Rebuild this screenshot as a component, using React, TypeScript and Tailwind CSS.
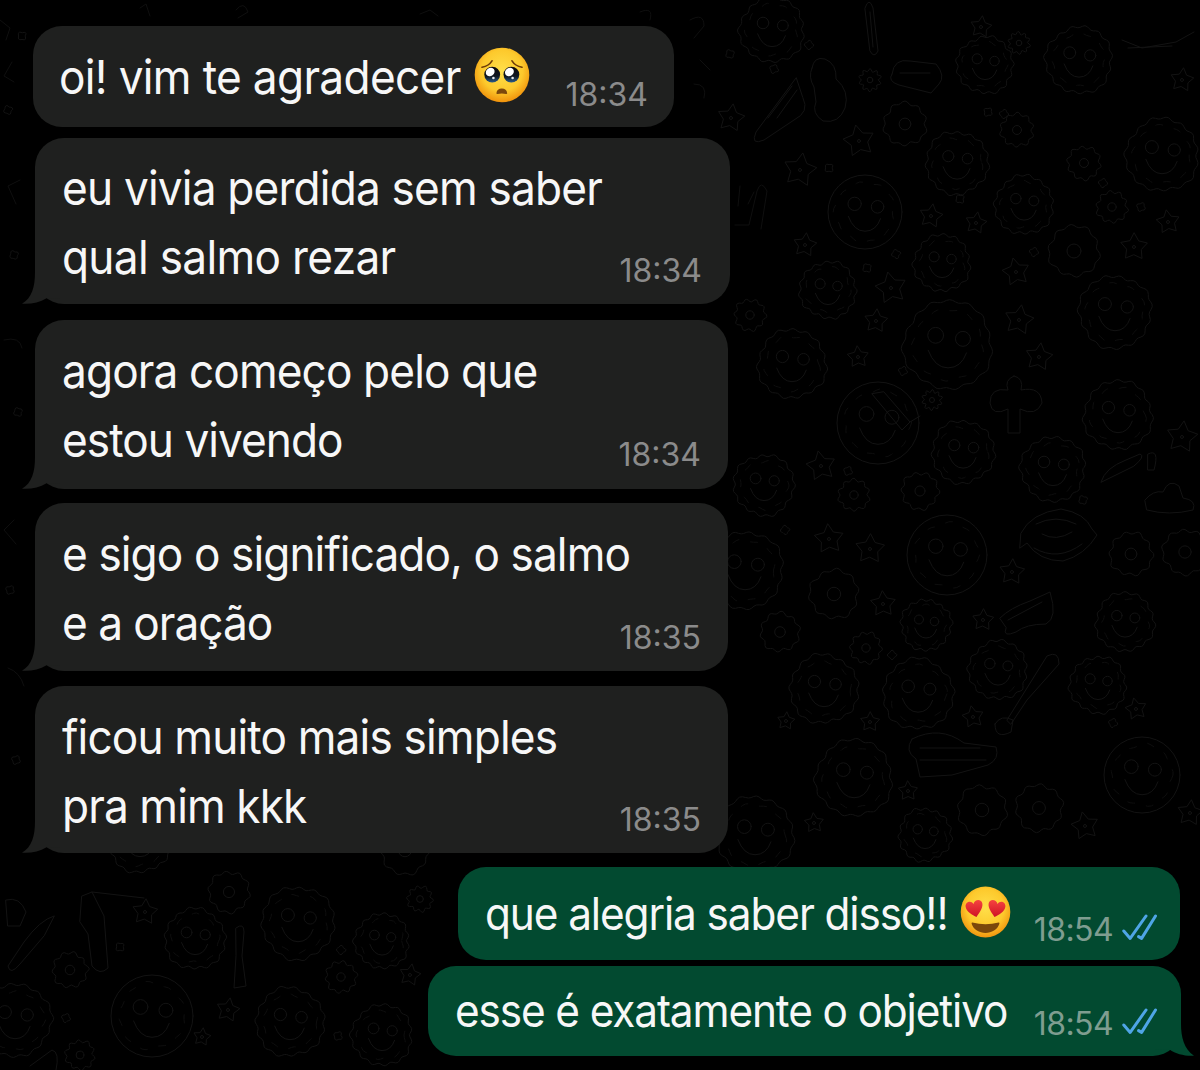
import React from "react";
import clsx from "clsx";

type Line = { text: string; className: string };

type Message = {
  id: number;
  mine?: boolean;
  tail?: boolean;
  lines: Line[];
  emoji?: "pleading" | "hearts";
  time: string;
  box: string;
  textBox: string;
  timeBox: string;
};

const messages: Message[] = [
  {
    id: 1,
    lines: [{ text: "oi! vim te agradecer", className: "tracking-[-0.71px]" }],
    emoji: "pleading",
    time: "18:34",
    box: "ml-[33px] mt-[26px] h-[101px] w-[641px] pt-[16px] pl-[26px] pr-[26px]",
    textBox: "w-[401px]",
    timeBox: "pb-[16px]",
  },
  {
    id: 2,
    tail: true,
    lines: [
      { text: "eu vivia perdida sem saber", className: "tracking-[-0.86px]" },
      { text: "qual salmo rezar", className: "tracking-[-0.72px]" },
    ],
    time: "18:34",
    box: "ml-[35px] mt-[11px] h-[166px] w-[695px] pt-[15px] pl-[27px] pr-[28px]",
    textBox: "w-[540px]",
    timeBox: "pb-[17px]",
  },
  {
    id: 3,
    tail: true,
    lines: [
      { text: "agora começo pelo que", className: "tracking-[-0.94px]" },
      { text: "estou vivendo", className: "tracking-[-1.02px]" },
    ],
    time: "18:34",
    box: "ml-[35px] mt-[16px] h-[169px] w-[693px] pt-[16px] pl-[27px] pr-[27px]",
    textBox: "w-[540px]",
    timeBox: "pb-[18px]",
  },
  {
    id: 4,
    tail: true,
    lines: [
      { text: "e sigo o significado, o salmo", className: "tracking-[-0.96px]" },
      { text: "e a oração", className: "tracking-[-1.08px]" },
    ],
    time: "18:35",
    box: "ml-[35px] mt-[14px] h-[168px] w-[693px] pt-[16px] pl-[27px] pr-[27px]",
    textBox: "w-[540px]",
    timeBox: "pb-[17px]",
  },
  {
    id: 5,
    tail: true,
    lines: [
      { text: "ficou muito mais simples", className: "tracking-[-0.89px]" },
      { text: "pra mim kkk", className: "tracking-[-0.95px]" },
    ],
    time: "18:35",
    box: "ml-[35px] mt-[15px] h-[167px] w-[693px] pt-[16px] pl-[27px] pr-[27px]",
    textBox: "w-[540px]",
    timeBox: "pb-[17px]",
  },
  {
    id: 6,
    mine: true,
    lines: [{ text: "que alegria saber disso!!", className: "tracking-[-1.15px]" }],
    emoji: "hearts",
    time: "18:54",
    box: "ml-[458px] mt-[14px] h-[93px] w-[722px] pt-[12px] pl-[27px] pr-[23px]",
    textBox: "w-[462px]",
    timeBox: "pb-[14px]",
  },
  {
    id: 7,
    mine: true,
    tail: true,
    lines: [{ text: "esse é exatamente o objetivo", className: "tracking-[-1.18px]" }],
    time: "18:54",
    box: "ml-[428px] mt-[6px] h-[90px] w-[753px] pt-[10px] pl-[27px] pr-[24px]",
    textBox: "w-[552px]",
    timeBox: "pb-[16px]",
  },
];

// [x, y, radius]
const faces = [
  [957, 163, 31], [865, 212, 37], [1024, 205, 29], [1162, 155, 36], [1079, 60, 33],
  [942, 263, 28], [792, 364, 34], [948, 345, 44], [1115, 312, 36], [963, 452, 31],
  [1053, 469, 32], [947, 555, 40], [764, 485, 30], [745, 570, 38],
  [926, 625, 25], [1125, 622, 29], [918, 694, 35], [998, 670, 29], [854, 778, 38],
  [1142, 775, 38], [755, 835, 38], [925, 835, 26], [824, 689, 34], [772, 30, 32],
  [985, 65, 28], [828, 290, 28], [1118, 415, 34], [878, 423, 41], [1098, 685, 28],
  [152, 1016, 41], [298, 923, 36], [290, 1022, 34], [382, 941, 27], [195, 939, 30],
  [382, 1035, 30], [15, 1020, 36], [140, 840, 32],
];

// outlines drawn as a plain ring instead of a scalloped one
const rings = [865, 878, 947, 1142, 152];

const flowers = [
  [1019, 43, 10], [905, 124, 21], [1017, 130, 16], [1084, 163, 16], [1112, 207, 15],
  [1074, 251, 25], [750, 315, 15], [920, 491, 18], [854, 495, 15], [1131, 554, 21],
  [834, 594, 24], [780, 632, 19], [866, 648, 15], [982, 810, 24], [1039, 808, 23],
  [1185, 552, 22], [229, 892, 20], [341, 977, 15], [420, 899, 12], [70, 970, 17],
  [870, 80, 10], [932, 400, 9], [405, 850, 24], [80, 1055, 14],
];

const stars = [
  [859, 141, 16], [731, 118, 14], [931, 216, 12], [976, 223, 11], [805, 245, 12],
  [1134, 247, 14], [1016, 272, 14], [891, 288, 16], [876, 321, 12], [1019, 320, 15],
  [1039, 357, 14], [821, 466, 15], [829, 539, 15], [870, 549, 15], [1012, 572, 13],
  [883, 604, 13], [981, 27, 11], [1182, 437, 16], [786, 721, 9], [908, 791, 10],
  [814, 823, 10], [1136, 709, 11], [1085, 826, 14], [1190, 813, 13], [973, 717, 11],
  [870, 722, 10], [983, 620, 11], [228, 1010, 12], [145, 912, 13], [410, 975, 11],
  [202, 1037, 9], [1182, 80, 12], [800, 170, 17], [1168, 222, 12], [858, 357, 11],
];

const dots = [
  [730, 54], [809, 45], [829, 168], [774, 69], [1103, 183], [896, 254], [1034, 252],
  [867, 268], [1141, 207], [903, 371], [960, 199], [848, 471], [785, 530], [892, 655],
  [1113, 723], [1083, 500], [120, 947], [341, 950], [338, 1036], [66, 1018], [8, 110],
  [22, 36], [14, 255], [18, 412], [10, 590], [16, 760], [1004, 114], [988, 112],
];

// wavy closed outline, the wobble depends on the position only
function wavy(cx: number, cy: number, r: number, lobes: number, amp: number) {
  const steps = lobes * 6;
  let d = "";
  for (let i = 0; i < steps; i++) {
    const a = (i / steps) * Math.PI * 2;
    const wobble = Math.sin(a * 3 + cx) * r * 0.025 + Math.sin(a * 5 + cy) * r * 0.02;
    const rr = r + Math.sin(a * lobes + cy) * amp + wobble;
    const x = cx + Math.cos(a) * rr;
    const y = cy + Math.sin(a) * rr;
    d += `${i === 0 ? "M" : "L"}${x.toFixed(1)} ${y.toFixed(1)}`;
  }
  return d + "Z";
}

function star(cx: number, cy: number, r: number) {
  let d = "";
  for (let i = 0; i < 10; i++) {
    const a = (i / 10) * Math.PI * 2 - Math.PI / 2 + Math.sin(cx) * 0.2;
    const rr = i % 2 === 0 ? r : r * 0.55;
    d += `${i === 0 ? "M" : "L"}${(cx + Math.cos(a) * rr).toFixed(1)} ${(cy + Math.sin(a) * rr).toFixed(1)}`;
  }
  return d + "Z";
}

function Wallpaper() {
  return (
    <svg
      className="absolute inset-0 h-full w-full"
      viewBox="0 0 1200 1070"
      fill="none"
      stroke="#131313"
      strokeWidth="1"
      strokeLinejoin="round"
      strokeLinecap="round"
      aria-hidden="true"
    >
      {faces.map(([x, y, r]) => (
        <g key={`${x}-${y}`}>
          {rings.includes(x) ? (
            <circle cx={x} cy={y} r={r} />
          ) : (
            <path d={wavy(x, y, r, 15, 1.3)} />
          )}
          <path d={wavy(x, y, r * 0.8, 9, 1)} strokeDasharray="7 12" stroke="#0e0e0e" />
          <circle cx={x - r * 0.28} cy={y - r * 0.22} r={r * 0.18} />
          <circle cx={x + r * 0.34} cy={y - r * 0.14} r={r * 0.17} />
          <path
            d={`M${x - r * 0.45} ${y + r * 0.12}Q${x - r * 0.3} ${y + r * 0.52} ${x} ${y + r * 0.52}T${x + r * 0.42} ${y + r * 0.18}`}
          />
        </g>
      ))}
      {flowers.map(([x, y, r]) => (
        <g key={`${x}-${y}`}>
          <path d={wavy(x, y, r, 10, 1.5)} />
          <circle cx={x} cy={y} r={r * 0.28} />
        </g>
      ))}
      {stars.map(([x, y, r]) => (
        <g key={`${x}-${y}`}>
          <path d={star(x, y, r)} />
          <circle cx={x} cy={y} r="1.5" />
        </g>
      ))}
      {dots.map(([x, y]) => (
        <path key={`${x}-${y}`} d={wavy(x, y, 4, 4, 0.7)} />
      ))}
      <path d="M865 8q4-12 8 0l5 43q-4 8-8 0zM870 12l3 35" />
      <path d="M796 78L756 132q-6 14 8 8l30-20q16-8 9-22zM792 86l-24 32M797 90l-20 28" />
      <path d="M892 74q2-16 18-13l26 3q10 12 3 20l-8 9-32-8q-12-4-7-11zM900 73h30" />
      <path d="M812 68q2-12 13-9 12 5 11 20 14 12 9 29-6 16-22 13-12-8-7-19l-2-15q-6-10-2-19z" />
      <path d="M884 392l26 30-8 8-30-36zM910 422l10-6" />
      <path d="M1014 376q10 2 7 14 20-4 21 13-6 14-22 6v24h-12v-24q-16 8-18-6 0-16 18-13-4-10 6-14z" />
      <path d="M1101 482q4-14 25-22l14-6q6 2-6 12zM1148 454q12-6 6 16h-6z" />
      <path d="M1000 618q10-10 30-17l20-9q8 26-4 32-20 0-30 8-14 6-10-4zM1008 620l34-18" />
      <path d="M1007 720l40-64q12-6 12 8l-32 36-16 24zM995 724q6-10 18-4l-2 12q-16 8-16-8z" />
      <path d="M912 739q28-14 52 4l32 4q4 12-8 18l-36 10-32 2-4-18q-12-8-4-20zM920 748h60M920 760h66" />
      <path d="M1021 533q10-20 40-24 24 4 31 20l5 6q-12 20-34 26-24 0-36-18l-7 5z" />
      <path d="M1036 524q20-10 40 0M1042 534q14 8 30-2M1034 548q24 14 48-4" />
      <path d="M1145 500q8-10 18-8 6-14 16-6l4 12q14 2 10 12-24 6-46 0z" />
      <path d="M1122 40l20 8 34-6 18-10M1128 48l44-2" />
      <path d="M82 896l10-4 12 24 4 52q-8 8-16-2l-4-32-8-12zM92 892l52 6" />
      <path d="M54 916q-14 4-30 26l-16 24q2 10 12-2l24-28z" />
      <path d="M236 928q8-6 8 4l-2 24 4 30-12 2 2-32z" />
      <path d="M30 1066l22-16q8 2 4 20M6 900q14-4 20 12l-6 14H8z" />
      <g stroke="#0f0f0f">
        <path d="M0 20l10 8-4 12M12 62l-8 14 10 6M20 180l-12 6 8 18M4 340q16-4 18 8M14 520l-10 10 12 14M8 668q12 4 16 18" />
        <path d="M140 8l6-4 4 12M236 10q8-10 12 2l-10 6M420 14l10-4 8 6M640 12q14-6 10 8M690 20q14-8 14 6l-10 12M694 84q14 0 10 14M700 60l10 10" />
        <path d="M735 225l14 0 8-34q4-12 10 0l-6 38M738 206l2-20M748 204l6-12" />
      </g>
    </svg>
  );
}

function PleadingFace() {
  return (
    <svg className="h-[56px] w-[56px]" viewBox="0 0 56 56" role="img" aria-label="🥺">
      <defs>
        <radialGradient id="pleadBase" cx="0.5" cy="0.42" r="0.58">
          <stop offset="0" stopColor="#ffdf4a" />
          <stop offset="0.65" stopColor="#fdc92c" />
          <stop offset="1" stopColor="#f0920c" />
        </radialGradient>
        <linearGradient id="pleadEye" x1="0" y1="0" x2="0" y2="1">
          <stop offset="0" stopColor="#0d0a0d" />
          <stop offset="0.6" stopColor="#10171f" />
          <stop offset="1" stopColor="#2a5c8c" />
        </linearGradient>
      </defs>
      <circle cx="28" cy="28" r="27.3" fill="url(#pleadBase)" />
      <g fill="none" stroke="#6f3c08" strokeWidth="1.6" strokeLinecap="round">
        <path d="M8 20.3q7-1.5 10-6.500" />
        <path d="M48 20.3q-7-1.5-10-6.500" />
      </g>
      <circle cx="18.2" cy="27.6" r="7.9" fill="url(#pleadEye)" />
      <circle cx="37.4" cy="27.6" r="7.9" fill="url(#pleadEye)" />
      <g fill="#fff">
        <ellipse cx="16.2" cy="25" rx="4.6" ry="4" transform="rotate(-35 16.2 25)" />
        <ellipse cx="35.4" cy="25" rx="4.6" ry="4" transform="rotate(-35 35.4 25)" />
        <circle cx="19.4" cy="31" r="1.3" opacity="0.9" />
        <circle cx="38.6" cy="31" r="1.3" opacity="0.9" />
      </g>
      <path d="M22.4 46.2q.6-4.6 5.4-4.6t5.4 4.600q0 1-1 .8-4.400-1-8.800 0-1 .2-1-.8z" fill="#7c480c" />
    </svg>
  );
}

function HeartEyes() {
  return (
    <svg className="h-[52px] w-[51px]" viewBox="0 0 51 52" role="img" aria-label="😍">
      <defs>
        <radialGradient id="heartBase" cx="0.5" cy="0.42" r="0.58">
          <stop offset="0" stopColor="#ffdf4a" />
          <stop offset="0.65" stopColor="#fdc92c" />
          <stop offset="1" stopColor="#f0950f" />
        </radialGradient>
        <linearGradient id="heartFill" x1="0" y1="0" x2="0" y2="1">
          <stop offset="0" stopColor="#f5433f" />
          <stop offset="1" stopColor="#cf1226" />
        </linearGradient>
      </defs>
      <ellipse cx="25.5" cy="26" rx="24.8" ry="25.5" fill="url(#heartBase)" />
      <path
        d="M16.5 31C12.500 29 6.300 25.800 5.600 20.800 5.100 16 11 14 13.500 18 14.600 13 21.600 12.600 22.400 17.800 23 22.400 18.800 27.600 16.500 31z"
        fill="url(#heartFill)"
      />
      <path
        d="M34.5 31C38.500 29 44.700 25.800 45.400 20.800 45.900 16 40 14 37.500 18 36.400 13 29.400 12.600 28.600 17.800 28 22.400 32.200 27.600 34.500 31z"
        fill="url(#heartFill)"
      />
      <path
        d="M12.3 36.600q13.200 3.400 26.400 0 .9 0 .7 1.200C37.600 43.600 31.600 47 25.500 47S13.400 43.600 11.600 37.800q-.2-1.200.7-1.200z"
        fill="#7b480b"
      />
    </svg>
  );
}

function DoubleCheck() {
  return (
    <svg
      className="-mt-[5px] ml-[9px] h-[27px] w-[35px]"
      viewBox="0 0 35 27"
      fill="none"
      stroke="#4fa5e6"
      strokeWidth="3"
      strokeLinecap="round"
      strokeLinejoin="round"
      aria-hidden="true"
    >
      <path d="M1.8 17L8.200 24.400 24 2" />
      <path d="M16.600 22.600L19.600 24.400 33.500 2" />
    </svg>
  );
}

function Tail({ mine }: { mine?: boolean }) {
  if (mine) {
    return (
      <svg className="absolute right-[-13px] bottom-0 h-[36px] w-[40px]" viewBox="0 0 40 36" fill="#024a30" aria-hidden="true">
        <path d="M0 0H27V4C27 17 30 29 40 35.700 31 36.300 22 34 15.500 29.500L0 30z" />
      </svg>
    );
  }
  return (
    <svg className="absolute bottom-0 left-[-13px] h-[36px] w-[40px]" viewBox="0 0 40 36" fill="#1f201f" aria-hidden="true">
      <path d="M40 0H13V4C13 19 10 30 0 35.700 9 36.300 17.500 34.500 24.500 30.200L40 30z" />
    </svg>
  );
}

function Bubble({ message }: { message: Message }) {
  const { mine, tail, lines, emoji, time, box, textBox, timeBox } = message;

  return (
    <div
      className={clsx(
        "relative flex shrink-0 justify-between",
        mine ? "rounded-[28px] bg-[#024a30]" : "rounded-[29px] bg-[#1f201f]",
        box
      )}
    >
      {tail && <Tail mine={mine} />}
      <div className="relative flex">
        <div
          className={clsx(
            "whitespace-nowrap text-[#f7f7f7]",
            mine ? "text-[45px]" : "text-[47px]",
            textBox
          )}
        >
          {lines.map((line) => (
            <p key={line.text} className="leading-[69px]">
              <span className={clsx("block w-max origin-left scale-x-[0.94]", line.className)}>
                {line.text}
              </span>
            </p>
          ))}
        </div>
        {emoji === "pleading" && (
          <div className="ml-[14px] pt-[5px]">
            <PleadingFace />
          </div>
        )}
        {emoji === "hearts" && (
          <div className="ml-[13px] pt-[7px]">
            <HeartEyes />
          </div>
        )}
      </div>
      <div className={clsx("relative flex items-center self-end", timeBox)}>
        <span
          className={clsx(
            "text-[32px] leading-[32px]",
            mine ? "tracking-[-0.6px] text-[#7f9d90]" : "text-[#8b8b8b]"
          )}
        >
          {time}
        </span>
        {mine && <DoubleCheck />}
      </div>
    </div>
  );
}

export default function App() {
  return (
    <main className="relative h-[1070px] w-[1200px] overflow-hidden bg-black font-['Inter','Liberation_Sans',sans-serif]">
      <Wallpaper />
      <div className="relative flex flex-col">
        {messages.map((message) => (
          <Bubble key={message.id} message={message} />
        ))}
      </div>
    </main>
  );
}
